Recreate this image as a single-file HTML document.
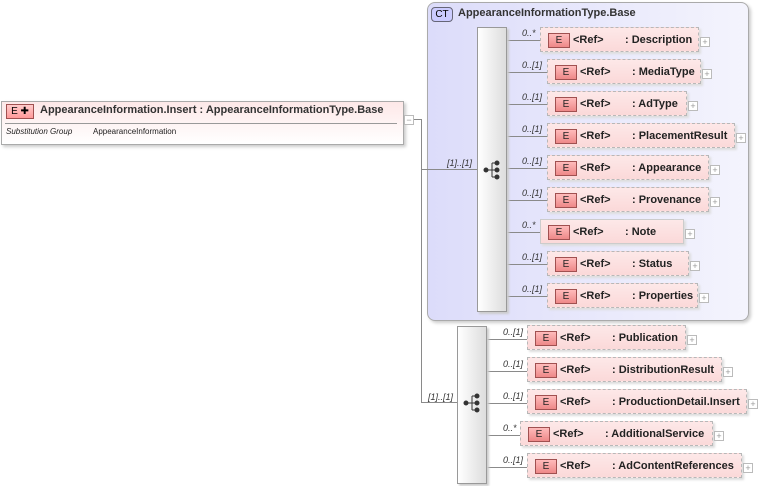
<!DOCTYPE html><html><head><style>
body{margin:0;width:758px;height:486px;background:#fff;position:relative;overflow:hidden;font-family:"Liberation Sans",sans-serif}
.a{position:absolute}
.ln{position:absolute;background:#8a8a8a;z-index:2}
.b{position:absolute;height:23px;border:1px dashed #b8b8b8;background:linear-gradient(#fde8e8,#fbd9d9);box-shadow:2px 2px 2px #ddd;font-size:11px;font-weight:bold;color:#222}
.e{position:absolute;left:7px;top:5px;width:20px;height:13px;border:1px solid #a05050;background:linear-gradient(#fbb,#e88);font-size:10px;font-weight:normal;text-align:center;line-height:13px;color:#222}
.r{position:absolute;left:32px;top:6px}
.n{position:absolute;left:84px;top:6px;white-space:nowrap}
.p{position:absolute;width:8px;height:8px;border:1px solid #bbb;background:#fff;font-size:9px;line-height:8px;text-align:center;color:#999}
.c{position:absolute;font-size:9px;font-style:italic;color:#333;z-index:2}
.seq{position:absolute;width:28px;border:1px solid #999;background:linear-gradient(90deg,#fff,#ddd);box-shadow:2px 2px 2px #ccc;z-index:3}
</style></head><body>
<!-- main element -->
<div class="a" style="left:1px;top:101px;width:401px;height:42px;border:1px solid #aaa;background:linear-gradient(#fde8e8,#fff);box-shadow:2px 2px 3px #ccc"></div>
<div class="a" style="left:6px;top:104px;width:26px;height:13px;border:1px solid #a05050;background:linear-gradient(#fcc,#f99);font-size:10px;text-align:center;line-height:13px">E ✚</div>
<div class="a" style="left:40px;top:104px;font-size:11px;font-weight:bold;color:#333">AppearanceInformation.Insert : AppearanceInformationType.Base</div>
<div class="a" style="left:5px;top:123px;width:392px;height:1px;background:#999"></div>
<div class="a" style="left:6px;top:127px;font-size:8px;font-style:italic;color:#222">Substitution Group</div>
<div class="a" style="left:93px;top:127px;font-size:8px;color:#222">AppearanceInformation</div>
<div class="p" style="left:404px;top:115px">−</div>
<!-- CT -->
<div class="a" style="left:427px;top:2px;width:320px;height:317px;border:1px solid #aaa;border-radius:8px;background:linear-gradient(90deg,#dcdcfa,#f4f4fd);box-shadow:2px 2px 3px #ccc"></div>
<div class="ln" style="left:414px;top:119px;width:7px;height:1px"></div>
<div class="ln" style="left:421px;top:119px;width:1px;height:284px"></div>
<div class="ln" style="left:421px;top:169px;width:57px;height:1px"></div>
<div class="ln" style="left:421px;top:402px;width:37px;height:1px"></div>
<div class="c" style="left:447px;top:158px">[1]..[1]</div>
<div class="c" style="left:428px;top:392px">[1]..[1]</div>
<div class="a" style="left:431px;top:7px;width:20px;height:13px;border:1px solid #667;border-radius:4px;background:#ccf;font-size:10px;text-align:center;line-height:13px">CT</div>
<div class="a" style="left:458px;top:7px;font-size:11px;font-weight:bold;color:#333">AppearanceInformationType.Base</div>
<div class="seq" style="left:477px;top:27px;height:283px"></div>
<div class="seq" style="left:457px;top:326px;height:156px"></div>
<svg class="a" style="left:482px;top:160px;z-index:4" width="20" height="20"><g fill="#333" stroke="#333"><circle cx="4" cy="10" r="2"/><line x1="4" y1="10" x2="10" y2="10"/><line x1="10" y1="3" x2="10" y2="17"/><line x1="10" y1="3" x2="15" y2="3"/><line x1="10" y1="10" x2="15" y2="10"/><line x1="10" y1="17" x2="15" y2="17"/><circle cx="15" cy="3" r="2"/><circle cx="15" cy="10" r="2"/><circle cx="15" cy="17" r="2"/></g></svg>
<svg class="a" style="left:462px;top:393px;z-index:4" width="20" height="20"><g fill="#333" stroke="#333"><circle cx="4" cy="10" r="2"/><line x1="4" y1="10" x2="10" y2="10"/><line x1="10" y1="3" x2="10" y2="17"/><line x1="10" y1="3" x2="15" y2="3"/><line x1="10" y1="10" x2="15" y2="10"/><line x1="10" y1="17" x2="15" y2="17"/><circle cx="15" cy="3" r="2"/><circle cx="15" cy="10" r="2"/><circle cx="15" cy="17" r="2"/></g></svg>

<!-- seq1 children -->
<div class="ln" style="left:506px;top:40px;width:34px;height:1px"></div><div class="c" style="left:522px;top:28px">0..*</div>
<div class="b" style="left:540px;top:27px;width:157px"><div class="e">E</div><div class="r">&lt;Ref&gt;</div><div class="n">: Description</div></div><div class="p" style="left:700px;top:37px">+</div>

<div class="ln" style="left:506px;top:72px;width:41px;height:1px"></div><div class="c" style="left:522px;top:60px">0..[1]</div>
<div class="b" style="left:547px;top:59px;width:152px"><div class="e">E</div><div class="r">&lt;Ref&gt;</div><div class="n">: MediaType</div></div><div class="p" style="left:702px;top:69px">+</div>

<div class="ln" style="left:506px;top:104px;width:41px;height:1px"></div><div class="c" style="left:522px;top:92px">0..[1]</div>
<div class="b" style="left:547px;top:91px;width:138px"><div class="e">E</div><div class="r">&lt;Ref&gt;</div><div class="n">: AdType</div></div><div class="p" style="left:688px;top:101px">+</div>

<div class="ln" style="left:506px;top:136px;width:41px;height:1px"></div><div class="c" style="left:522px;top:124px">0..[1]</div>
<div class="b" style="left:547px;top:123px;width:186px"><div class="e">E</div><div class="r">&lt;Ref&gt;</div><div class="n">: PlacementResult</div></div><div class="p" style="left:736px;top:133px">+</div>

<div class="ln" style="left:506px;top:168px;width:41px;height:1px"></div><div class="c" style="left:522px;top:156px">0..[1]</div>
<div class="b" style="left:547px;top:155px;width:160px"><div class="e">E</div><div class="r">&lt;Ref&gt;</div><div class="n">: Appearance</div></div><div class="p" style="left:710px;top:165px">+</div>

<div class="ln" style="left:506px;top:200px;width:41px;height:1px"></div><div class="c" style="left:522px;top:188px">0..[1]</div>
<div class="b" style="left:547px;top:187px;width:160px"><div class="e">E</div><div class="r">&lt;Ref&gt;</div><div class="n">: Provenance</div></div><div class="p" style="left:710px;top:197px">+</div>

<div class="ln" style="left:506px;top:232px;width:34px;height:1px"></div><div class="c" style="left:522px;top:220px">0..*</div>
<div class="b" style="left:540px;top:219px;width:142px;border-style:solid;border-color:#ccc"><div class="e">E</div><div class="r">&lt;Ref&gt;</div><div class="n">: Note</div></div><div class="p" style="left:685px;top:229px">+</div>

<div class="ln" style="left:506px;top:264px;width:41px;height:1px"></div><div class="c" style="left:522px;top:252px">0..[1]</div>
<div class="b" style="left:547px;top:251px;width:140px"><div class="e">E</div><div class="r">&lt;Ref&gt;</div><div class="n">: Status</div></div><div class="p" style="left:690px;top:261px">+</div>

<div class="ln" style="left:506px;top:296px;width:41px;height:1px"></div><div class="c" style="left:522px;top:284px">0..[1]</div>
<div class="b" style="left:547px;top:283px;width:149px"><div class="e">E</div><div class="r">&lt;Ref&gt;</div><div class="n">: Properties</div></div><div class="p" style="left:699px;top:293px">+</div>

<!-- seq2 children -->
<div class="ln" style="left:486px;top:339px;width:41px;height:1px"></div><div class="c" style="left:503px;top:327px">0..[1]</div>
<div class="b" style="left:527px;top:325px;width:157px"><div class="e">E</div><div class="r">&lt;Ref&gt;</div><div class="n">: Publication</div></div><div class="p" style="left:687px;top:335px">+</div>

<div class="ln" style="left:486px;top:371px;width:41px;height:1px"></div><div class="c" style="left:503px;top:359px">0..[1]</div>
<div class="b" style="left:527px;top:357px;width:193px"><div class="e">E</div><div class="r">&lt;Ref&gt;</div><div class="n">: DistributionResult</div></div><div class="p" style="left:723px;top:367px">+</div>

<div class="ln" style="left:486px;top:403px;width:41px;height:1px"></div><div class="c" style="left:503px;top:391px">0..[1]</div>
<div class="b" style="left:527px;top:389px;width:218px"><div class="e">E</div><div class="r">&lt;Ref&gt;</div><div class="n">: ProductionDetail.Insert</div></div><div class="p" style="left:748px;top:399px">+</div>

<div class="ln" style="left:486px;top:435px;width:34px;height:1px"></div><div class="c" style="left:503px;top:423px">0..*</div>
<div class="b" style="left:520px;top:421px;width:191px"><div class="e">E</div><div class="r">&lt;Ref&gt;</div><div class="n">: AdditionalService</div></div><div class="p" style="left:714px;top:431px">+</div>

<div class="ln" style="left:486px;top:467px;width:41px;height:1px"></div><div class="c" style="left:503px;top:455px">0..[1]</div>
<div class="b" style="left:527px;top:453px;width:213px"><div class="e">E</div><div class="r">&lt;Ref&gt;</div><div class="n">: AdContentReferences</div></div><div class="p" style="left:743px;top:463px">+</div>
</body></html>
